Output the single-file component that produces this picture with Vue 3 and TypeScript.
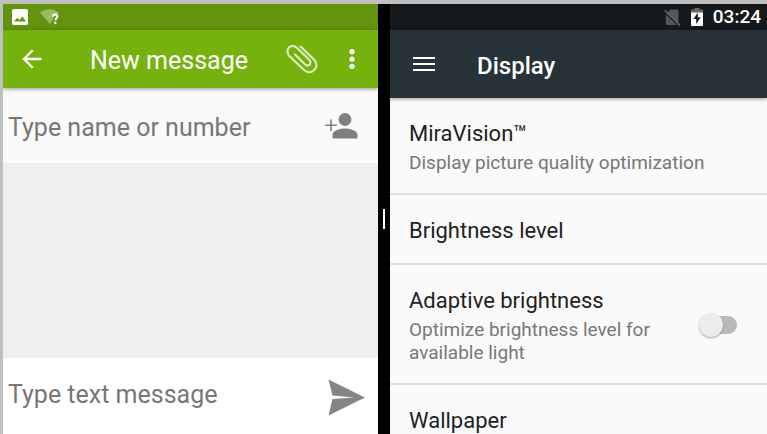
<script setup lang="ts">
import { ref } from 'vue'

interface Setting {
  id: string
  title: string
  summary?: string
  toggle?: boolean
}

const settings: Setting[] = [
  { id: 'miravision', title: 'MiraVision™', summary: 'Display picture quality optimization' },
  { id: 'brightness', title: 'Brightness level' },
  {
    id: 'adaptive',
    title: 'Adaptive brightness',
    summary: 'Optimize brightness level for available light',
    toggle: true,
  },
  { id: 'wallpaper', title: 'Wallpaper' },
]

const recipient = ref('')
const message = ref('')
const adaptive = ref(false)
</script>

<template>
  <div class="screen">
    <section class="pane messaging">
      <div class="status status-left">
        <svg width="16" height="16" viewBox="0 0 16 16">
          <path fill="#fff" fill-rule="evenodd" d="M2 0h12a2 2 0 0 1 2 2v12a2 2 0 0 1-2 2H2a2 2 0 0 1-2-2V2a2 2 0 0 1 2-2zM2 12.500h12L10.500 7.500 7.500 11 5.200 8.700z" />
        </svg>
        <svg width="20" height="16" viewBox="0 0 20 16">
          <path fill="#9aba62" d="M0 3.500Q9.500-3 19 3.500L17.500 5.500H13V10.500L10 15z" />
          <path fill="none" stroke="#fff" stroke-width="2" d="M13 7.700Q13 5.500 15.200 5.500T17.400 7.500C17.400 9 15.300 9.200 15.300 11.500" />
          <circle cx="15.300" cy="14" r="1.200" fill="#fff" />
        </svg>
      </div>
      <header class="bar bar-green">
        <button class="icon-button" type="button" aria-label="Back">
          <svg width="20" height="20" viewBox="0 0 20 20" fill="none" stroke="#fff" stroke-width="2.300">
            <path d="M19.500 10H2M10.700 1.200 2 10l8.700 8.800" />
          </svg>
        </button>
        <h1 class="title-light">New message</h1>
        <button class="icon-button attach" type="button" aria-label="Attach">
          <svg width="32" height="30" viewBox="0 0 32 30" fill="none" stroke="#e1efc9" stroke-width="2" stroke-linecap="round">
            <path d="M14.500 2.500 28 15.500C31 18.500 31.200 23 28.500 25.800S21.500 29.200 18 26L3.300 12C.9 9.500.9 5.700 2.900 3.500S8.300 1.300 10.800 3.800L23 15.500C24.800 17.300 25 19.200 23.500 20.700S20.200 21.500 18.700 20L9 10.500" />
          </svg>
        </button>
        <button class="icon-button" type="button" aria-label="More options">
          <svg width="6" height="20" viewBox="0 0 6 20" fill="#fff">
            <circle cx="3" cy="2.700" r="2.600" />
            <circle cx="3" cy="10" r="2.600" />
            <circle cx="3" cy="17.300" r="2.600" />
          </svg>
        </button>
      </header>
      <div class="recipients">
        <input v-model="recipient" type="text" aria-label="Recipient" placeholder="Type name or number" />
        <button class="icon-button" type="button" aria-label="Add contact">
          <svg width="33" height="26" viewBox="0 0 33 26" fill="#7e807e">
            <circle cx="20" cy="6.500" r="6.400" />
            <path d="M7.500 25.500V22C7.500 18 14 15.600 20 15.600S32.500 18 32.500 22v3.500z" />
            <path d="M5.200 6.500h1.600v5h5v1.600h-5v5H5.200v-5H.2v-1.600h5z" />
          </svg>
        </button>
      </div>
      <main class="conversation"></main>
      <div class="compose">
        <input v-model="message" type="text" aria-label="Message" placeholder="Type text message" />
        <button class="icon-button" type="button" aria-label="Send">
          <svg width="37" height="37" viewBox="0 0 37 37" fill="#858585">
            <path d="M.5.500 37 18.500.5 36.500 4.500 20 26 18.500 4.500 16.500z" />
          </svg>
        </button>
      </div>
    </section>

    <div class="divider"><span class="handle"></span></div>

    <section class="pane display">
      <div class="status status-right">
        <svg width="17" height="17" viewBox="0 0 17 17">
          <path fill="#55585a" d="M6.500.500H13Q14.500.500 14.500 2V15L2.500 4.500zM1.800 5.500 13 16H3.300Q1.800 16 1.800 14.500z" />
          <path stroke="#65686a" stroke-width="1.500" d="M.7 1.200 16 16.500" />
        </svg>
        <svg class="battery" width="12" height="18" viewBox="0 0 12 18">
          <path fill="#66696b" d="M3.500 0h5v1.500H12V6H0V1.500h3.500z" />
          <path fill="#fff" d="M0 4.500h12V17a1 1 0 0 1-1 1H1a1 1 0 0 1-1-1z" />
          <path fill="#15191c" d="M6.800 4.500 2.500 11h2.700v5L9.700 9.300H6.800z" />
        </svg>
        <time>03:24</time>
      </div>
      <header class="bar bar-dark">
        <button class="icon-button" type="button" aria-label="Menu">
          <svg width="22" height="16" viewBox="0 0 22 16" fill="#fff">
            <path d="M0 1h22v2H0zM0 7h22v2H0zM0 13h22v2H0z" />
          </svg>
        </button>
        <h2 class="title-medium">Display</h2>
      </header>
      <ul class="settings">
        <li v-for="item in settings" :key="item.id" class="setting">
          <label class="text" :for="item.toggle ? item.id : undefined">
            <span class="name">{{ item.title }}</span>
            <span v-if="item.summary" class="summary">{{ item.summary }}</span>
          </label>
          <input v-if="item.toggle" :id="item.id" v-model="adaptive" class="switch" type="checkbox" role="switch" />
        </li>
      </ul>
    </section>
  </div>
</template>

<style>
body {
  overflow: hidden;
}
</style>

<style scoped>
.screen {
  box-sizing: border-box;
  display: grid;
  grid-template-columns: minmax(0, 375fr) 12px minmax(0, 377fr);
  height: 100vh;
  border-top: 4px solid #c0bfbd;
  border-left: 3px solid #c0c0c0;
  background: #fafafa;
  font-family: Roboto, "Noto Sans", sans-serif;
}

.pane {
  display: flex;
  flex-direction: column;
  min-height: 0;
  overflow: hidden;
}

.status {
  display: flex;
  align-items: center;
  box-sizing: border-box;
  flex: none;
  height: 26px;
}

.status-left {
  gap: 12px;
  padding: 0 9px;
  background: #649310;
}

.status-right {
  justify-content: flex-end;
  gap: 10px;
  padding: 0 6px;
  background: #15191c;
  color: #fff;
  font-size: 19px;
  font-weight: 500;
  line-height: 24px;
}

.bar {
  position: relative;
  display: flex;
  align-items: center;
  box-sizing: border-box;
  flex: none;
  color: #fff;
  box-shadow: 0 1px 4px rgba(0, 0, 0, 0.4);
}

.bar-green {
  height: 58px;
  padding: 0 23px 0 19px;
  background: #76b20e;
}

.bar-dark {
  height: 68px;
  gap: 42px;
  padding: 0 23px;
  background: #283339;
}

h1,
h2 {
  margin: 0;
  line-height: 30px;
}

.title-light {
  flex: 1;
  padding: 4px 0 0 48px;
  font-size: 25px;
  font-weight: 400;
}

.title-medium {
  padding-top: 4px;
  font-size: 24px;
  font-weight: 500;
}

.icon-button {
  display: flex;
  flex: none;
  padding: 0;
  border: 0;
  background: none;
}

.attach {
  margin-right: 31px;
}

.recipients,
.compose {
  display: flex;
  align-items: center;
  box-sizing: border-box;
  flex: none;
  padding-left: 5px;
}

.recipients {
  height: 75px;
  padding-right: 20px;
  background: #fafafa;
}

.compose {
  height: 76px;
  padding-top: 2px;
  padding-right: 13px;
  background: #fff;
}

.recipients input,
.compose input {
  flex: 1;
  min-width: 0;
  padding: 0;
  border: 0;
  outline: 0;
  background: none;
  color: #212121;
  font-family: inherit;
  font-size: 25px;
  line-height: 30px;
}

.recipients input {
  padding-top: 4px;
}

.compose input {
  padding-bottom: 4px;
}

input::placeholder {
  color: #777;
  opacity: 1;
}

.conversation {
  flex: 1;
  background: #efefef;
}

.divider {
  display: flex;
  align-items: center;
  justify-content: center;
  background: #000;
}

.handle {
  width: 2px;
  height: 20px;
  background: #fff;
}

.settings {
  margin: 0;
  padding: 0;
  list-style: none;
}

.setting {
  display: flex;
  align-items: center;
  justify-content: space-between;
  padding: 20px 30px 18px 19px;
  border-bottom: 2px solid #e0e0e0;
}

.text {
  display: flex;
  flex-direction: column;
}

.name {
  padding-top: 2px;
  color: #212121;
  font-size: 22px;
  line-height: 28px;
}

.summary {
  padding: 3px 0 1px;
  color: #777;
  font-size: 19px;
  line-height: 23px;
}

.switch {
  position: relative;
  flex: none;
  width: 38px;
  height: 24px;
  margin: 0;
  appearance: none;
}

.switch::before {
  position: absolute;
  inset: 3px 0 3px 4px;
  border-radius: 9px;
  background: #b9b9b9;
  content: "";
}

.switch::after {
  position: absolute;
  top: 0;
  left: 0;
  width: 24px;
  height: 24px;
  border-radius: 50%;
  background: #ececec;
  box-shadow: 0 1px 2px rgba(0, 0, 0, 0.35);
  content: "";
}

.switch:checked::after {
  right: 0;
  left: auto;
}
</style>
